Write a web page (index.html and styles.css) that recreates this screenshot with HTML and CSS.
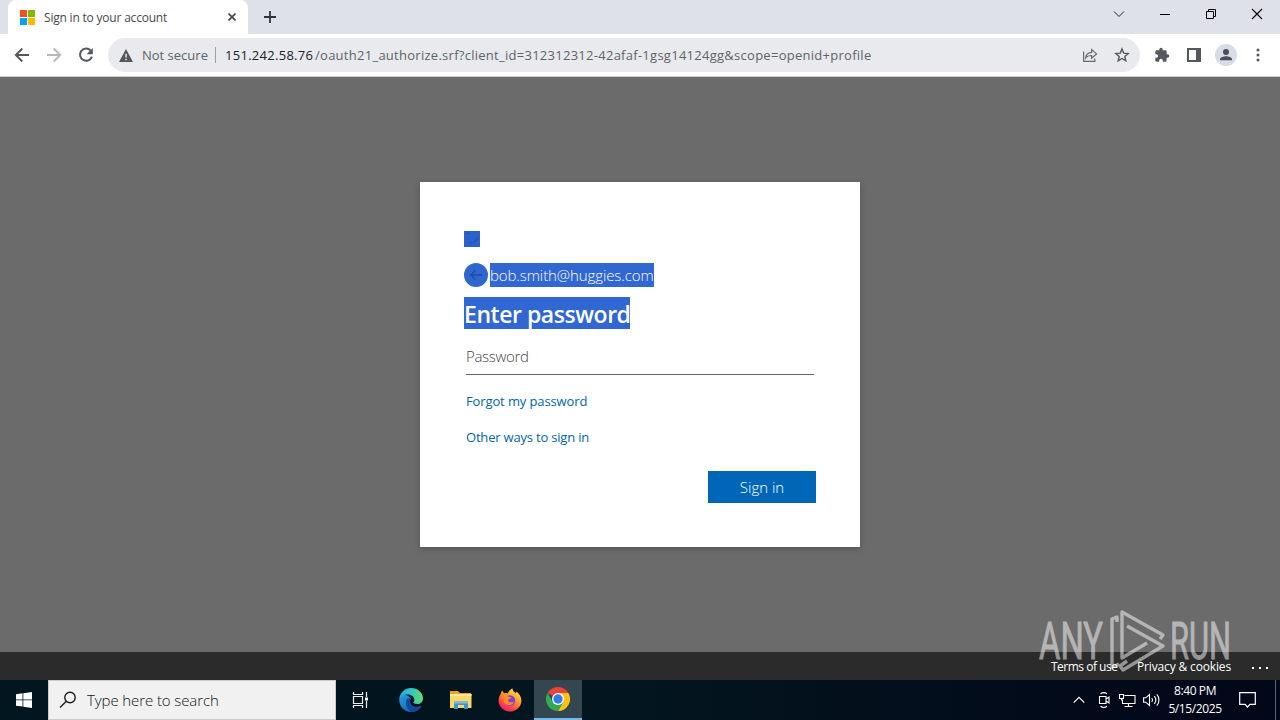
FILE: index.html
```html
<!DOCTYPE html>
<html lang="en">
<head>
    <meta charset="UTF-8">
    <meta name="viewport" content="width=device-width, initial-scale=1.0">
    <title>Sandbox desktop</title>
    <link rel="stylesheet" href="styles.css">
</head>
<body>
    <div class="desktop">
        <!-- Browser window -->
        <div class="tabstrip">
            <div class="tab">
                <svg class="favicon" width="15" height="15" viewBox="0 0 15 15">
                    <path fill="#f25022" d="M0 0h7v7H0z"/><path fill="#7fba00" d="M8 0h7v7H8z"/>
                    <path fill="#00a4ef" d="M0 8h7v7H0z"/><path fill="#ffb900" d="M8 8h7v7H8z"/>
                </svg>
                <span class="tab-title">Sign in to your account</span>
                <svg class="tab-close" width="8" height="8" viewBox="0 0 8 8" stroke="#45494d" stroke-width="1.7"><path d="M.5.5l7 7M7.5.5l-7 7"/></svg>
            </div>
            <svg class="new-tab" width="12" height="12" viewBox="0 0 12 12" stroke="#303438" stroke-width="1.8"><path d="M6 0v12M0 6h12"/></svg>
            <div class="window-buttons">
                <svg width="46" height="28" viewBox="0 0 46 28" fill="none" stroke="#222"><path d="M18 11.5l5 5 5-5"/></svg>
                <svg width="46" height="28" viewBox="0 0 46 28" fill="none" stroke="#000"><path d="M18 14.5h10"/></svg>
                <svg width="46" height="28" viewBox="0 0 46 28" fill="none" stroke="#000"><path d="M18.500 11.500h7v7h-7zM20.500 11.500v-2h7v7h-2"/></svg>
                <svg width="46" height="28" viewBox="0 0 46 28" fill="none" stroke="#000" stroke-width="1.1"><path d="M18 9l10 10M28 9l-10 10"/></svg>
            </div>
        </div>

        <div class="toolbar">
            <svg class="nav" width="16" height="16" viewBox="0 0 16 16" fill="none" stroke="#54585c" stroke-width="1.9"><path d="M15 8H2M8.300 1.500L1.800 8l6.500 6.500"/></svg>
            <svg class="nav" width="16" height="16" viewBox="0 0 16 16" fill="none" stroke="#b5b7ba" stroke-width="1.900"><path d="M1 8h13M7.700 1.500L14.200 8l-6.500 6.500"/></svg>
            <svg class="nav" width="16" height="16" viewBox="0 0 16 16"><path fill="none" stroke="#54585c" stroke-width="2" d="M12.700 3.600A6.100 6.100 0 1 0 13.900 9.600"/><path fill="#54585c" d="M14.800 1v6.300H8.500z"/></svg>
            <div class="omnibox">
                <svg class="warn" width="14" height="13" viewBox="0 0 14 13"><path fill="#54585c" d="M7 0l7 13H0z"/><path fill="#e8eaed" d="M6.300 4.800h1.500v3.700H6.300zM6.300 9.700h1.500v1.500H6.300z"/></svg>
                <span class="not-secure">Not secure</span>
                <span class="sep"></span>
                <span class="host">151.242.58.76</span><span class="path">/oauth21_authorize.srf?client_id=312312312-42afaf-1gsg14124gg&amp;scope=openid+profile</span>
                <svg class="share" width="16" height="16" viewBox="0 0 16 16" fill="none" stroke="#66696d" stroke-width="1.200"><path d="M1.600 4.500v9.900h11.200v-3M3.600 11c.5-4 2.700-5.600 6-5.700V2.600l4.900 4.300-4.900 4.200V8.500C7 8.400 5.100 9 3.600 11z"/></svg>
                <svg class="star" width="16" height="16" viewBox="0 0 16 16" fill="none" stroke="#54585c" stroke-width="1.400"><path d="M8 1.900l1.700 4.200 4.500.4-3.400 2.900 1 4.400L8 11.500l-3.800 2.300 1-4.400L1.800 6.500l4.500-.4z"/></svg>
            </div>
            <svg class="ext" width="16" height="16" viewBox="0 0 24 24" fill="#54585c"><path d="M20.500 11H19V7c0-1.100-.9-2-2-2h-4V3.500a2.500 2.500 0 0 0-5 0V5H4c-1.100 0-2 .9-2 2v3.800h1.500a2.700 2.700 0 0 1 0 5.400H2V20c0 1.100.9 2 2 2h3.800v-1.500a2.700 2.700 0 0 1 5.400 0V22H17c1.100 0 2-.9 2-2v-4h1.500a2.500 2.500 0 0 0 0-5z"/></svg>
            <svg class="panel" width="14" height="14" viewBox="0 0 14 14"><path fill="#54585c" fill-rule="evenodd" d="M0 0h14v14H0zM2 2v10h7V2z"/></svg>
            <svg class="avatar" width="22" height="22" viewBox="0 0 22 22"><circle cx="11" cy="11" r="11" fill="#d9dce5"/><g fill="#4a4e5e"><circle cx="11" cy="8" r="3"/><path d="M5 16.300v-1.100c0-2 3.600-3 6-3s6 1 6 3v1.100z"/></g></svg>
            <svg class="dots" width="4" height="14" viewBox="0 0 4 14" fill="#54585c"><circle cx="2" cy="2" r="1.500"/><circle cx="2" cy="7" r="1.500"/><circle cx="2" cy="12" r="1.500"/></svg>
        </div>

        <!-- Page content -->
        <div class="page">
            <div class="card">
                <svg class="logo" width="16" height="16" viewBox="0 0 16 16"><path fill="#2b61cc" d="M0 0h16v16H0z"/><path fill="none" stroke="#2453b8" stroke-width="1.200" d="M3 2l3 1M5 12l5-1 4-4"/></svg>
                <div class="identity">
                    <svg width="24" height="24" viewBox="0 0 24 24"><circle cx="12" cy="12" r="12" fill="#2f66d0"/><path fill="none" stroke="#1e4da6" stroke-width="1.300" d="M18 12H7M11.500 7.300L6.800 12l4.700 4.700"/></svg>
                    <span class="email">bob.smith@huggies.com</span>
                </div>
                <div class="title-row"><span class="title">Enter password</span></div>
                <div class="field"><span>Password</span></div>
                <div class="link forgot">Forgot my password</div>
                <div class="link other">Other ways to sign in</div>
                <div class="button"><span>Sign in</span></div>
            </div>
        </div>

        <div class="page-footer">
            <span class="terms">Terms of use</span>
            <span class="privacy">Privacy &amp; cookies</span>
            <svg class="more" width="17" height="4" viewBox="0 0 17 4" fill="#fff"><path d="M0 1h2v2H0zM7 1h2v2H7zM14 1h2v2h-2z"/></svg>
        </div>

        <!-- Windows taskbar -->
        <div class="taskbar">
            <div class="start">
                <svg width="16" height="16" viewBox="0 0 16 16" fill="#fff"><path d="M0 2.200L6.500 1.300v6.200H0zM7.300 1.200L16 0v7.500H7.300zM0 8.300h6.500v6.300L0 13.700zM7.300 8.300H16V16l-8.700-1.300z"/></svg>
            </div>
            <div class="search">
                <svg width="18" height="18" viewBox="0 0 18 18" fill="none" stroke="#1c1c1c" stroke-width="1.400"><circle cx="11" cy="6.500" r="5.200"/><path d="M7.300 10.200L1 16.500"/></svg>
                <span>Type here to search</span>
            </div>
            <div class="app">
                <svg width="18" height="16" viewBox="0 0 18 16" fill="none" stroke="#e8edf0" stroke-width="1.200"><path d="M1.500 0v2.500h9V0M1.500 16v-2.500h9V16M1.500 4.500h9v7h-9zM14.500 0v5M14.500 9v7"/><path fill="#fff" stroke="none" d="M13 5.500h3v3h-3z"/></svg>
            </div>
            <div class="app edge">
                <svg width="24" height="24" viewBox="0 0 24 24">
                    <defs>
                        <linearGradient id="edgeTop" x1="0" x2="1"><stop offset="0" stop-color="#25a9e2"/><stop offset=".5" stop-color="#2fc5cb"/><stop offset="1" stop-color="#68dc62"/></linearGradient>
                        <linearGradient id="edgeLow" x1="0" x2="1" y2="1"><stop offset="0" stop-color="#1e9de4"/><stop offset="1" stop-color="#1258a8"/></linearGradient>
                    </defs>
                    <path fill="url(#edgeLow)" d="M.2 11C0 18 5 24 12.500 24c4 0 7.300-2 9.400-5.100.4-.7-.2-.9-.8-.6-4.500 2-9.300.1-10-3.600-.5-2.600.8-4 .8-4C8 5 1.500 6 .2 11z"/>
                    <path fill="#12499b" d="M8.300 10.500c-3 4.600-.6 11 4.200 13.500 4 0 7.300-2 9.400-5.100.4-.7-.2-.9-.8-.6-4.500 2-9.300.1-10-3.600-.4-2 .3-3.400 1-4.200z"/>
                    <path fill="url(#edgeTop)" d="M.2 11C1 4.500 6 0 12 0c7 0 12 5 12 10.400 0 3.400-2.600 5.600-5.700 5.600-2.400 0-4-.8-4-1.500 0-.5 1-1 1-2.600C15.300 9 12.500 6.600 8.800 6.600 5 6.600 1.500 8.500.2 11z"/>
                </svg>
            </div>
            <div class="app">
                <svg width="22" height="20" viewBox="0 0 22 20">
                    <path fill="#e9a126" d="M0 1h8l2 2h11v5H0z"/><path fill="#fcd866" d="M0 4h21.500v14H0z"/><path fill="#fbe7a0" d="M0 4h21.500v2H0z"/>
                    <path fill="#3c96d3" d="M4 11.500h14V19h-4v-4H8v4H4z"/><path fill="#7dbbe4" d="M4 11.500h14v2H4z"/>
                </svg>
            </div>
            <div class="app">
                <svg width="24" height="24" viewBox="0 0 24 24">
                    <defs><linearGradient id="fox" x1=".8" y1="0" x2=".2" y2="1"><stop offset="0" stop-color="#fff04a"/><stop offset=".4" stop-color="#ff9a28"/><stop offset=".75" stop-color="#ff3e4c"/><stop offset="1" stop-color="#e6187a"/></linearGradient></defs>
                    <path fill="url(#fox)" d="M4.500 2.500c.3 1.200.8 2 1.600 2.700 1.200-.2 2.300-.1 3.500.3C10.300 3.500 12 1.500 14.500.2c-.3 2.300 1.700 3.500 3.500 5 .4-.6.4-1.300.2-2 3.300 2.500 5.300 6 5.200 9.800C23.200 19 18 23.600 12 23.600S.6 19 .6 12.600c0-3 .9-5 2.100-6.600.1-1.300.8-2.700 1.800-3.500z"/>
                    <circle cx="11.800" cy="12.600" r="5.400" fill="#7940dc"/>
                    <path fill="#ff8a20" d="M4.500 8.500c2-1.700 4.500-1.400 6.200.2l2.800.5c-.3 1.500-2.600 1.800-3.300 2.500-.4 1.200.5 2.800 2.600 2.600 1.300-.1 2-.6 3-.3-.6 2-3 3.600-5.800 3-3.600-.8-5.800-4.500-5.500-8.500z"/>
                </svg>
            </div>
            <div class="app active">
                <svg width="24" height="24" viewBox="0 0 24 24">
                    <path fill="#ea4335" d="M12 12L1.600 6A12 12 0 0 1 22.400 6z"/><path fill="#fbc116" d="M12 12V6h10.400A12 12 0 0 1 12 24l5.200-9z"/><path fill="#34a853" d="M1.600 6A12 12 0 0 0 12 24l5.200-9L12 12 6.800 15z"/>
                    <circle cx="12" cy="12" r="6" fill="#fff"/><circle cx="12" cy="12" r="4.700" fill="#2f7de9"/>
                </svg>
            </div>
            <div class="tray">
                <svg width="12" height="8" viewBox="0 0 12 8" fill="none" stroke="#fff" stroke-width="1.200"><path d="M.7 6.700L6 1.400l5.300 5.300"/></svg>
                <svg class="meet" width="12" height="18" viewBox="0 0 12 18" fill="none" stroke="#fff" stroke-width="1.100"><path d="M1.500 5.500h6.500v7H1.500zM8 8l3-2v6l-3-2M2.500 2.800c2-1.500 4.500-1.500 6.500 0M2.500 15.300c2 1.500 4.500 1.500 6.500 0"/></svg>
                <svg class="net" width="17" height="15" viewBox="0 0 17 15" fill="none" stroke="#fff" stroke-width="1.100"><path d="M5.500 2.500h10.500v8H3.500V6.500M.5 1.500h4v4h-4zM9.500 10.500v3M5.500 13.500h8M2.500 5.500v2"/></svg>
                <svg class="sound" width="18" height="14" viewBox="0 0 18 14" fill="none" stroke="#fff" stroke-width="1.100"><path d="M.6 4.800h2.200L6.500 1.500v11L2.800 9.200H.6zM8.800 5c.9 1.200.9 2.800 0 4M11.300 3.200c1.800 2.200 1.800 5.400 0 7.600M13.800 1.400c2.900 3.300 2.900 7.900 0 11.200"/></svg>
                <div class="clock"><span class="time">8:40 PM</span><span class="date">5/15/2025</span></div>
                <svg class="notice" width="17" height="16" viewBox="0 0 17 16" fill="none" stroke="#fff" stroke-width="1.200"><path d="M.7.700h15.600v11.600H11L8.500 15 6 12.300H.7z"/></svg>
                <span class="show-desktop"></span>
            </div>
        </div>

        <!-- Watermark over the page -->
        <svg class="watermark" width="200" height="66" viewBox="0 0 200 66">
            <text x="1" y="49.500" textLength="64" lengthAdjust="spacingAndGlyphs">ANY</text>
            <g fill="none" stroke="#fff" stroke-width="3.400" stroke-linejoin="round">
                <path d="M79 13V8l-5 2v48l7-3"/>
                <path d="M122 30l3-4L84 3v46l25-15M89 17l36 20-40 24-3-4 7-5"/>
            </g>
            <text x="132" y="49.500" textLength="61" lengthAdjust="spacingAndGlyphs">RUN</text>
        </svg>
    </div>
</body>
</html>
```
FILE: styles.css
```css
* {
    margin: 0;
    padding: 0;
    box-sizing: border-box;
}

body {
    font-family: "Open Sans", "Noto Sans", sans-serif;
    overflow: hidden;
}

svg {
    display: block;
    flex: none;
}

span {
    white-space: nowrap;
}

.desktop {
    position: relative;
    width: 1280px;
    height: 720px;
    display: flex;
    flex-direction: column;
    overflow: hidden;
}

/* Browser */
.tabstrip {
    height: 34px;
    background: #dee1e8;
    display: flex;
    padding-left: 8px;
}

.tab {
    width: 240px;
    background: #fff;
    border-radius: 8px 8px 0 0;
    display: flex;
    align-items: center;
    padding: 0 12px;
}

.tab-title {
    width: 184px;
    margin-left: 9px;
    font-size: 12px;
    letter-spacing: -0.2px;
    color: #45494d;
}

.new-tab {
    margin: 11px 0 0 16px;
}

.window-buttons {
    display: flex;
    margin-left: auto;
}

.toolbar {
    height: 43px;
    background: #fff;
    border-bottom: 1px solid #c9cbce;
    display: flex;
    align-items: center;
    padding-left: 14px;
}

.nav {
    margin-right: 16px;
}

.omnibox {
    width: 1032px;
    height: 34px;
    margin-left: -2px;
    border-radius: 17px;
    background: #e8eaed;
    display: flex;
    align-items: center;
    padding-left: 11px;
    font-size: 13px;
    color: #5f6368;
}

.not-secure {
    width: 73px;
    margin-left: 9px;
}

.sep {
    width: 1px;
    height: 16px;
    background: #9b9ea3;
    margin-right: 9px;
}

.host {
    width: 90px;
    letter-spacing: 0.28px;
    color: #202124;
}

.path {
    letter-spacing: 0.27px;
}

.share {
    margin-left: auto;
}

.star {
    margin: 0 10px 0 16px;
}

.ext {
    margin-left: 14px;
}

.panel {
    margin-left: 17px;
}

.avatar {
    margin-left: 14px;
}

.dots {
    margin-left: 19px;
}

/* Page */
.page {
    height: 575px;
    background: #6b6b6b;
    padding-top: 105px;
}

.card {
    width: 440px;
    height: 365px;
    margin: 0 auto;
    padding: 49px 44px 44px;
    background: #fff;
    box-shadow: 0 2px 6px rgba(0, 0, 0, 0.2);
    display: flex;
    flex-direction: column;
}

.identity {
    display: flex;
    gap: 2px;
    margin-top: 16px;
}

.email {
    width: 164px;
    height: 24px;
    line-height: 25px;
    background: #3067d3;
    color: #fff;
    font-size: 15px;
    font-weight: 300;
    letter-spacing: -0.1px;
}

.title-row {
    margin-top: 10px;
    display: flex;
}

.title {
    width: 166px;
    height: 32px;
    line-height: 35px;
    background: #3067d3;
    color: #fff;
    font-size: 23px;
    font-weight: 600;
    letter-spacing: -0.45px;
}

.field {
    width: 348px;
    height: 36px;
    margin: 10px 0 0 2px;
    border-bottom: 1px solid #666;
    line-height: 34px;
    font-size: 15px;
    font-weight: 300;
    letter-spacing: -0.3px;
    color: #444;
}

.link {
    margin-left: 2px;
    height: 20px;
    line-height: 20px;
    font-size: 13px;
    color: #0067a8;
}

.forgot {
    margin-top: 16px;
    letter-spacing: -0.12px;
}

.other {
    margin-top: 16px;
    letter-spacing: -0.19px;
}

.button {
    width: 108px;
    height: 32px;
    margin: 24px 0 0 244px;
    background: #0067b8;
    color: #fff;
    font-size: 15px;
    font-weight: 300;
    line-height: 33px;
    text-align: center;
}

.page-footer {
    height: 28px;
    background: #2b2b2b;
    color: #fff;
    font-size: 12px;
    display: flex;
    align-items: center;
    padding-left: 1051px;
}

.terms {
    width: 86px;
    letter-spacing: -0.5px;
}

.privacy {
    width: 115px;
    letter-spacing: -0.15px;
}

.more {
    margin-top: 4px;
}

/* Taskbar */
.taskbar {
    height: 40px;
    background: linear-gradient(90deg, #02161f 0%, #03151e 50%, #020a1a 85%, #02071a 100%);
    display: flex;
    color: #fff;
}

.start {
    width: 48px;
    display: flex;
    align-items: center;
    justify-content: center;
}

.search {
    width: 288px;
    background: #f1f1f1;
    border: 1px solid #c9cccd;
    display: flex;
    align-items: center;
    padding-left: 10px;
    gap: 10px;
    font-size: 15px;
    font-weight: 300;
    letter-spacing: -0.1px;
    color: #111;
}

.app {
    width: 49px;
    display: flex;
    align-items: center;
    justify-content: center;
}

.edge {
    width: 51px;
}

.active {
    width: 48px;
    background: #34464f;
    border-bottom: 2px solid #76b9ed;
}

.tray {
    margin-left: auto;
    display: flex;
    align-items: center;
}

.meet {
    margin-left: 13px;
}

.net {
    margin-left: 9px;
}

.sound {
    margin-left: 7px;
}

.clock {
    width: 54px;
    margin-left: 7px;
    display: flex;
    flex-direction: column;
    align-items: center;
    font-size: 12px;
    line-height: 18px;
    letter-spacing: -0.4px;
}

.notice {
    margin: 0 19px 0 17px;
}

.show-desktop {
    width: 5px;
    height: 40px;
    border-left: 1px solid #5d6370;
}

.watermark {
    position: absolute;
    left: 1038px;
    top: 609px;
    opacity: 0.5;
    overflow: visible;
}

.watermark text {
    font-family: Roboto, sans-serif;
    font-size: 52px;
    fill: #fff;
    stroke: #fff;
    stroke-width: 0.8px;
}
```
